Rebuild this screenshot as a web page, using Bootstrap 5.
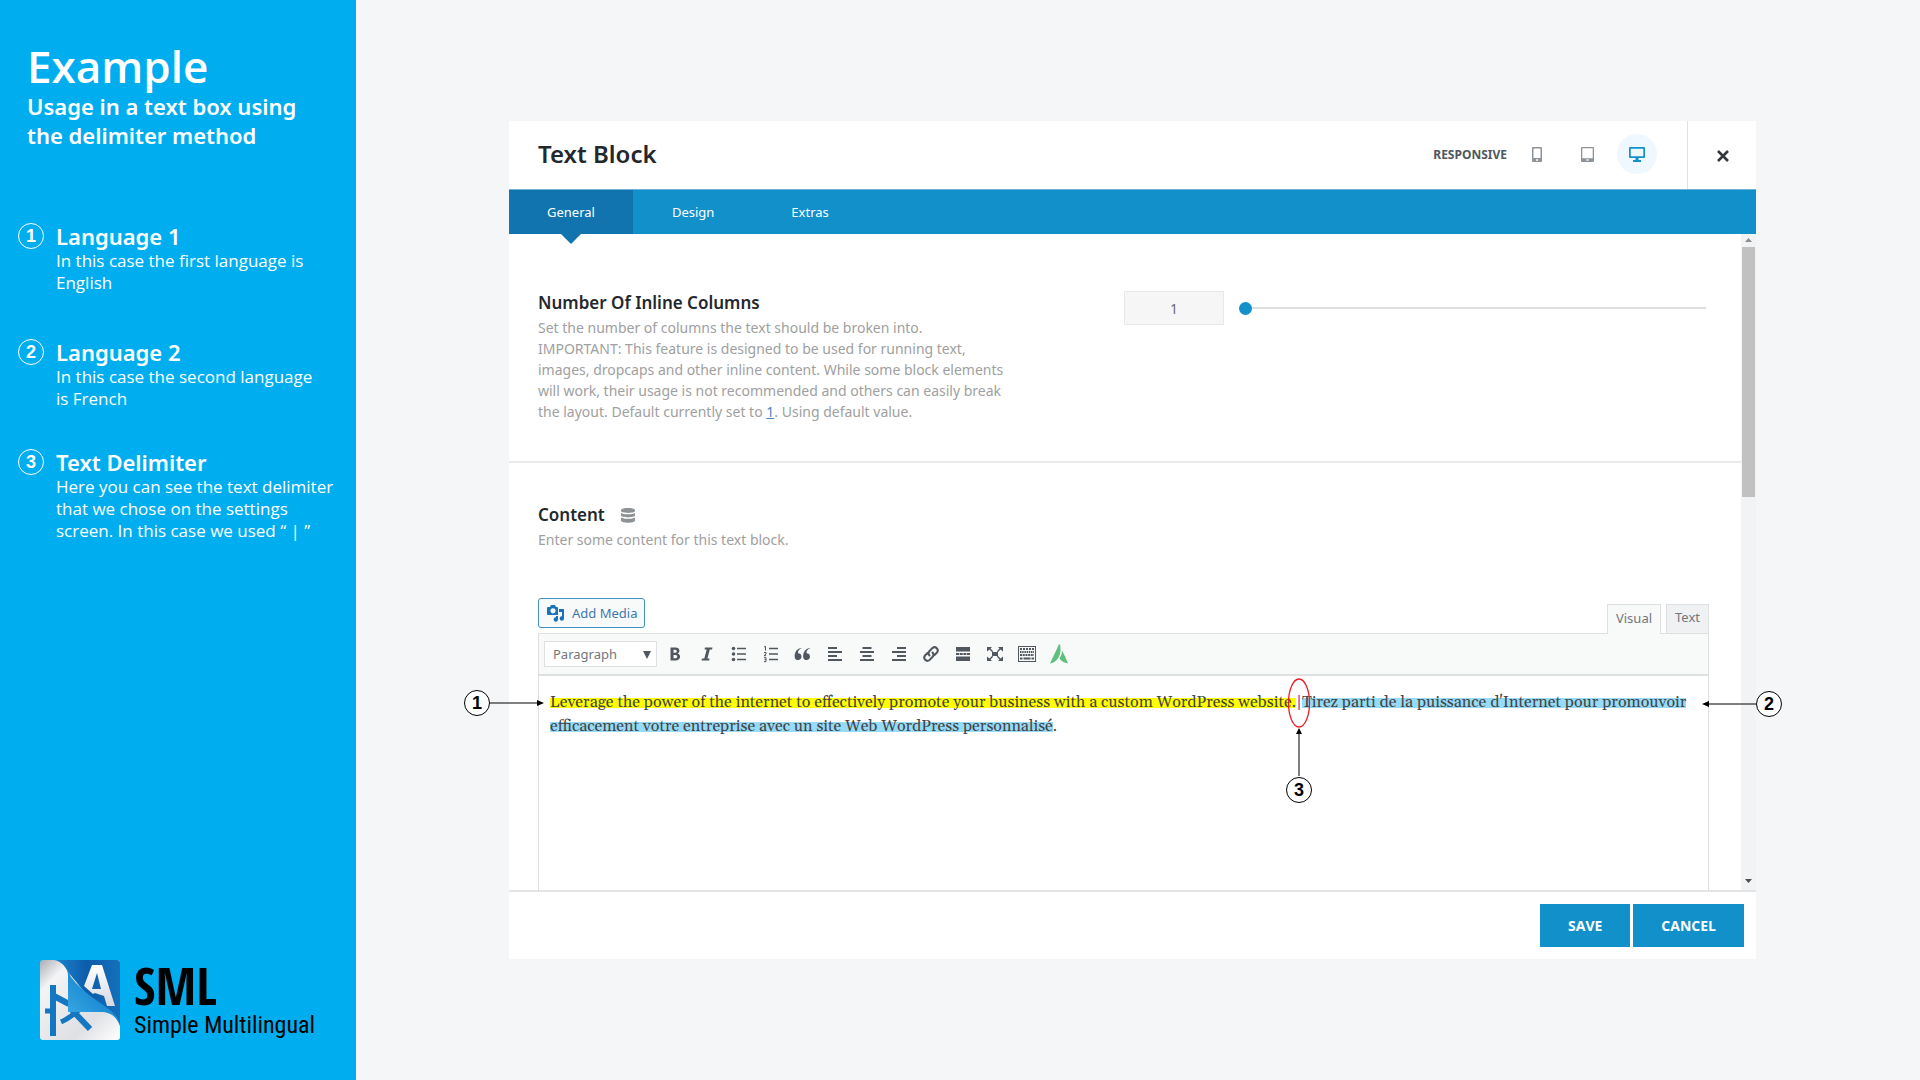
<!DOCTYPE html>
<html lang="en">
<head>
<meta charset="utf-8">
<meta name="viewport" content="width=device-width, initial-scale=1">
<title>Simple Multilingual – Example</title>
<link href="https://cdn.jsdelivr.net/npm/bootstrap@5.3.0/dist/css/bootstrap.min.css" rel="stylesheet">
<style>
  body { background: #f4f6f8; font-family: "Noto Sans", "Open Sans", sans-serif; font-size: 14px; line-height: 21px; }
  .guide { width: 356px; background: #00aef0; padding: 40px 12px 40px 18px; }
  .guide-title { font-family: "Open Sans", sans-serif; font-size: 44px; line-height: 52px; font-weight: 600; margin: 0 0 0 9px; }
  .guide-sub { font-size: 22px; line-height: 29px; font-weight: 600; margin: 0 40px 73px 9px; }
  .guide-list { gap: 45px; }
  .guide-list li { gap: 12px; }
  .guide-list li:nth-child(2) { margin-bottom: -6px; }
  .guide-head { font-size: 22px; line-height: 27px; font-weight: 600; margin: 0; }
  .guide-text { font-family: "Open Sans", sans-serif; font-size: 17px; line-height: 22px; margin: 0; }
  .pin { width: 26px; height: 26px; border: 1px solid currentColor; border-radius: 50%; font: 700 18px/24px "Liberation Sans", sans-serif; text-align: center; flex: none; }
  .brand { gap: 14px; margin-left: 22px; color: #000; }
  .brand-big { font-family: "Open Sans Condensed", "Lato", sans-serif; font-size: 52px; line-height: 50px; font-weight: 700; }
  .brand-small { font-family: "Roboto Condensed", "Lato", sans-serif; font-size: 24px; line-height: 30px; }

  .stage { padding: 121px 164px 121px 153px; }
  .panel-box { background: #fff; }
  .panel-head { height: 68px; padding: 0 0 2px 29px; }
  .panel-title { font-size: 24px; line-height: 28px; font-weight: 600; color: #23282d; margin: 0; }
  .resp-label { font-size: 12px; font-weight: 700; color: #50575e; margin-right: 10px; }
  .dev { width: 40px; height: 40px; border: 0; border-radius: 50%; background: none; color: #8d9399; padding: 0; margin-right: 10px; display: grid; place-items: center; }
  .dev.on { background: #eff8fe; color: #1190ca; margin-right: 30px; }
  .shut { width: 69px; height: 68px; margin-bottom: -2px; border: 0; border-left: 1px solid #dfe2e5; background: none; color: #32373c; padding: 2px 0 0 1px; display: grid; place-items: center; }
  .tabs-bar { background: #1190ca; height: 45px; border-top: 1px solid #6fb4d6; }
  .tabs-bar .nav-link { color: #fff; font-size: 13px; line-height: 20px; padding: 12px 38px; border-radius: 0; position: relative; }
  .tabs-bar .nav-link.active { background: #1174ae; }
  .tabs-bar .nav-item + .nav-item { margin-left: 1px; }
  .tabs-bar .nav-link.active::after { content: ""; position: absolute; left: 50%; top: 100%; margin-left: -10px; border: 10px solid transparent; border-top-color: #1174ae; border-bottom: 0; }
  .opt { padding: 57px 32px 39px 29px; border-bottom: 2px solid #e9eaeb; }
  .opt-head { font-size: 17px; line-height: 24px; font-weight: 600; color: #23282d; margin: 0 0 2px; }
  .opt-info { color: #a0a0a0; margin: 0; max-width: 468px; }
  .opt-info a { color: #4a86c0; }
  .opt-left { width: 586px; flex: none; }
  .num { width: 100px; height: 34px; border: 1px solid #e8e8e8; background: #f6f6f6; border-radius: 0; color: #6b6b6b; text-align: center; font-size: 14px; padding: 0; flex: none; }
  .slide { appearance: none; -webkit-appearance: none; height: 14px; background: none; flex: 1; min-width: 0; margin: 0 3px 0 15px; }
  .slide::-webkit-slider-runnable-track { height: 2px; background: #dedede; }
  .slide::-webkit-slider-thumb { -webkit-appearance: none; width: 13px; height: 13px; border-radius: 50%; background: #1190ca; margin-top: -5px; }
  .opt-edit { padding: 40px 32px 0 29px; }
  .media { height: 30px; border: 1px solid #3f8fca; border-radius: 3px; background: #f8fafa; color: #3d78ad; font-size: 13px; line-height: 20px; padding: 0 7px 0 8px; gap: 7px; }
  .mode { font-size: 13px; line-height: 20px; height: 29px; padding: 0 8px 4px; border: 1px solid #dddfe1; border-bottom: 0; background: #f0f1f2; color: #72777c; border-radius: 0; }
  .mode.on { background: #f8fafa; height: 30px; margin-bottom: -1px; position: relative; }
  .media-row { height: 35px; margin-top: 48px; }
  .edit-box { border: 1px solid #dddfe1; border-bottom: 0; }
  .tools { height: 42px; background: #f8fafa; border-bottom: 2px solid #dddfe1; padding-left: 5px; }
  .kind { width: 113px; height: 26px; border: 1px solid #dddfe1; background: #fff; color: #72777c; font-size: 13px; line-height: 20px; padding: 0 8px; appearance: none; -webkit-appearance: none; }
  .kind-wrap { position: relative; margin-right: 2px; }
  .kind-wrap svg { position: absolute; right: 6px; top: 10px; pointer-events: none; }
  .tool { width: 32px; height: 32px; border: 0; background: none; padding: 0; color: #50575e; display: grid; place-items: center; }
  .copy { font: 16px/24px "Gelasio", "Georgia", "Liberation Serif", serif; color: #444; padding: 14px 10px 0 11px; height: 214px; position: relative; }
  .hl { background: linear-gradient(#ff0, #ff0) 0 60% / 100% 10px no-repeat; -webkit-box-decoration-break: clone; box-decoration-break: clone; }
  .hl-b { background-image: linear-gradient(#96dbf8, #96dbf8); }
  .delim { position: relative; color: #8a3a8a; }
  .note { position: absolute; color: #000; }
  .note .pin { background: #fff; }
  .note-1 { right: 100%; top: 14px; margin-right: -5px; }
  .note-2 { left: 100%; top: 15px; margin-left: -6px; }
  .note-3 { left: 50%; top: -14px; width: 26px; margin-left: -13px; }
  .bar-col { width: 15px; background: #f1f3f4; padding: 3px 0 6px; flex: none; }
  .bar-thumb { width: 13px; height: 250px; background: #c1c1c1; margin: 4px 0 auto; }
  .panel-foot { border-top: 2px solid #e3e4e5; padding: 12px 12px 12px; gap: 3px; }
  .act { background: #1190ca; border: 0; border-radius: 0; color: #fff; font: 700 14px/20px "Open Sans", sans-serif; height: 43px; padding: 0 28px; }
</style>
</head>
<body>
<div class="d-flex min-vh-100">
  <aside class="guide d-flex flex-column text-white flex-shrink-0">
    <h1 class="guide-title">Example</h1>
    <p class="guide-sub">Usage in a text box using the delimiter method</p>
    <ol class="guide-list list-unstyled d-flex flex-column m-0">
      <li class="d-flex"><span class="pin">1</span><div><h2 class="guide-head">Language 1</h2><p class="guide-text">In this case the first language is<br>English</p></div></li>
      <li class="d-flex"><span class="pin">2</span><div><h2 class="guide-head">Language 2</h2><p class="guide-text">In this case the second language<br>is French</p></div></li>
      <li class="d-flex"><span class="pin">3</span><div><h2 class="guide-head">Text Delimiter</h2><p class="guide-text">Here you can see the text delimiter<br>that we chose on the settings<br>screen. In this case we used “ | ”</p></div></li>
    </ol>
    <div class="brand d-flex mt-auto">
      <svg width="80" height="80" viewBox="0 0 80 80" class="flex-shrink-0" aria-hidden="true">
        <defs>
          <linearGradient id="gl" x1="0" y1="0" x2="1" y2="1"><stop offset="0" stop-color="#a9adb3"/><stop offset=".2" stop-color="#f4f4f6"/><stop offset=".7" stop-color="#dfe0e4"/><stop offset="1" stop-color="#fff"/></linearGradient>
          <linearGradient id="gb" x1="0" y1="0" x2="1" y2="0"><stop offset="0" stop-color="#1c86cc"/><stop offset=".5" stop-color="#0d5cab"/><stop offset="1" stop-color="#1470ba"/></linearGradient>
          <linearGradient id="gf" x1="0" y1="1" x2="1" y2="0"><stop offset="0" stop-color="#45b4ea"/><stop offset=".5" stop-color="#1f8fd6"/><stop offset="1" stop-color="#1060b0"/></linearGradient>
          <linearGradient id="ga" x1="0" y1="0" x2="0" y2="1"><stop offset="0" stop-color="#fff"/><stop offset="1" stop-color="#d6d9e0"/></linearGradient>
        </defs>
        <rect width="80" height="80" rx="3" fill="url(#gl)"/>
        <path d="M14 0H77a3 3 0 0 1 3 3V66C76 54 66 50 56 46L28 12C24 4 20 1 14 0Z" fill="url(#gb)"/>
        <path d="M52 5h10l13 41h-8l-3-10-9-3-2 1-9-8Zm5 8-5 16h9Z" fill="url(#ga)" fill-rule="evenodd"/>
        <g stroke="#1577c0" fill="none"><path d="M13 25V76" stroke-width="6"/><path d="M5 51H14" stroke-width="5"/><path d="M14 36 29 44" stroke-width="6"/><path d="M21 62C30 58 34 54 39 50" stroke-width="5"/><path d="M32 50 50 69" stroke-width="6"/></g>
        <path d="M15 0C25 3 28 10 31 17C42 32 60 42 70 50C76 55 79 59 80 65C76 56 70 52 60 52H28V16C28 8 24 2 15 0Z" fill="url(#gf)"/>
      </svg>
      <div><div class="brand-big">SML</div><div class="brand-small text-nowrap">Simple Multilingual</div></div>
    </div>
  </aside>

  <main class="stage flex-grow-1">
    <section class="panel-box">
      <header class="panel-head d-flex align-items-center">
        <h2 class="panel-title me-auto">Text Block</h2>
        <span class="resp-label">RESPONSIVE</span>
        <button class="dev" aria-label="Phone"><svg width="10" height="15" viewBox="0 0 10 15"><path fill="currentColor" fill-rule="evenodd" d="M1 0h8a1 1 0 0 1 1 1v13a1 1 0 0 1-1 1H1a1 1 0 0 1-1-1V1a1 1 0 0 1 1-1Zm.5 1.500v9.500h7v-9.500ZM4 12.200v1.500h2v-1.500Z"/></svg></button>
        <button class="dev" aria-label="Tablet"><svg width="13" height="15" viewBox="0 0 13 15"><path fill="currentColor" fill-rule="evenodd" d="M1 0h11a1 1 0 0 1 1 1v13a1 1 0 0 1-1 1H1a1 1 0 0 1-1-1V1a1 1 0 0 1 1-1Zm.3 1.300v10h10.400v-10ZM5.500 12.300v1.500h2v-1.500Z"/></svg></button>
        <button class="dev on" aria-label="Desktop"><svg width="16" height="15" viewBox="0 0 16 15"><path fill="currentColor" fill-rule="evenodd" d="M1 0h14a1 1 0 0 1 1 1v9a1 1 0 0 1-1 1H9.500v2H12v2H4v-2h2.500v-2H1a1 1 0 0 1-1-1V1a1 1 0 0 1 1-1Zm.7 1.700v7.600h12.600V1.700Z"/></svg></button>
        <button class="shut" aria-label="Close"><svg width="12" height="12" viewBox="0 0 12 12" stroke="currentColor" stroke-width="2.600"><path d="M1 1 11 11M11 1 1 11"/></svg></button>
      </header>
      <nav class="tabs-bar">
        <ul class="nav">
          <li class="nav-item"><a class="nav-link active" href="#">General</a></li>
          <li class="nav-item"><a class="nav-link" href="#">Design</a></li>
          <li class="nav-item"><a class="nav-link" href="#">Extras</a></li>
        </ul>
      </nav>
      <div class="d-flex">
        <div class="flex-grow-1">
          <div class="opt d-flex align-items-start">
            <div class="opt-left">
              <h3 class="opt-head" id="cols">Number Of Inline Columns</h3>
              <p class="opt-info">Set the number of columns the text should be broken into. IMPORTANT: This feature is designed to be used for running text, images, dropcaps and other inline content. While some block elements will work, their usage is not recommended and others can easily break the layout. Default currently set to <a href="#">1</a>. Using default value.</p>
            </div>
            <div class="d-flex align-items-center flex-grow-1">
              <input class="num" type="text" value="1" aria-labelledby="cols">
              <input class="slide" type="range" min="1" max="6" value="1" aria-labelledby="cols">
            </div>
          </div>
          <div class="opt-edit">
            <h3 class="opt-head d-flex align-items-center">Content
              <svg class="ms-3" width="14" height="15" viewBox="0 0 14 15" fill="#8f9295"><path d="M0 2.200C0-.7 14-.7 14 2.200V3C14 5.500 0 5.500 0 3ZM0 5c2 1.700 12 1.700 14 0v2.500C14 9.800 0 9.800 0 7.500ZM0 9.500c2 1.700 12 1.700 14 0v3C14 15.500 0 15.500 0 12.500Z"/></svg>
            </h3>
            <p class="opt-info">Enter some content for this text block.</p>
            <div class="media-row d-flex justify-content-between align-items-start">
              <button class="media d-flex align-items-center"><svg width="18" height="18" viewBox="0 0 18 18" fill="#1a72b8"><path fill-rule="evenodd" d="M1 3h2l1-2h4l1 2h1a1 1 0 0 1 1 1v7H1a1 1 0 0 1-1-1V4a1 1 0 0 1 1-1Zm5 1.200a2.600 2.600 0 1 0 .01 0Z"/><path d="M12 5h5v9.500a2.200 2.200 0 1 1-2-2.200V8h-3Z"/><path d="M9 12h2v3.500a2.200 2.200 0 1 1-2-2.200Z"/></svg>Add Media</button>
              <div class="d-flex align-self-end align-items-end" style="gap:5px">
                <button class="mode on">Visual</button>
                <button class="mode">Text</button>
              </div>
            </div>
            <div class="edit-box">
              <div class="tools d-flex align-items-center">
                <div class="kind-wrap"><select class="kind d-block" aria-label="Text style"><option>Paragraph</option></select><svg width="8" height="8" viewBox="0 0 8 8"><path fill="#50575e" d="M0 0h8L4 8Z"/></svg></div>
                <button class="tool" aria-label="Bold"><svg width="20" height="20" viewBox="0 0 20 20"><path fill="currentColor" fill-rule="evenodd" d="M5.500 3.500h5c5 0 4.800 5 2 6 4 1 3.400 7-2 7h-5Zm3 2.300v3h1.800c2 0 2-3 0-3Zm0 5.100v3.400h2c2.300 0 2.300-3.400 0-3.400Z"/></svg></button>
                <button class="tool" aria-label="Italic"><svg width="20" height="20" viewBox="0 0 20 20"><path fill="currentColor" d="M8 3.500h7.500L15 5.500h-2.200l-2.400 9h2.200l-.5 2H4.500l.5-2h2.300l2.400-9H7.500Z"/></svg></button>
                <button class="tool" aria-label="Bulleted list"><svg width="20" height="20" viewBox="0 0 20 20"><g fill="currentColor"><circle cx="4.500" cy="4.500" r="1.800"/><circle cx="4.500" cy="10" r="1.800"/><circle cx="4.500" cy="15.500" r="1.800"/></g><path d="M8 4.500h9M8 10h9M8 15.500h9" stroke="currentColor" stroke-width="1.500"/></svg></button>
                <button class="tool" aria-label="Numbered list"><svg width="20" height="20" viewBox="0 0 20 20" fill="none" stroke="currentColor"><path d="M8 4.500h9M8 10h9M8 15.500h9" stroke-width="1.500"/><path d="M3 3l1.500-.7V6.500M3 8.500h2V10L3 11.700h2.200M3 13.700h2v4H3M3.500 15.700H5"/></svg></button>
                <button class="tool" aria-label="Quote"><svg width="20" height="20" viewBox="0 0 20 20" fill="currentColor"><path d="M9 4C6 5 4.800 7 5 9.200a3.400 3.400 0 1 1-3.300 4C1.300 8.500 4 4 9 4ZM17.500 4c-3 1-4.200 3-4 5.200a3.400 3.400 0 1 1-3.300 4C9.800 8.500 12.500 4 17.500 4Z"/></svg></button>
                <button class="tool" aria-label="Align left"><svg width="20" height="20" viewBox="0 0 20 20"><path d="M3 4h9M3 8h14M3 12h9M3 16h14" stroke="currentColor" stroke-width="2"/></svg></button>
                <button class="tool" aria-label="Align center"><svg width="20" height="20" viewBox="0 0 20 20"><path d="M5.500 4h9M3 8h14M5.500 12h9M3 16h14" stroke="currentColor" stroke-width="2"/></svg></button>
                <button class="tool" aria-label="Align right"><svg width="20" height="20" viewBox="0 0 20 20"><path d="M8 4h9M3 8h14M8 12h9M3 16h14" stroke="currentColor" stroke-width="2"/></svg></button>
                <button class="tool" aria-label="Link"><svg width="20" height="20" viewBox="0 0 20 20" fill="none" stroke="currentColor" stroke-width="2" stroke-linecap="round"><path d="M8.500 11.500a3.200 3.200 0 0 1 0-4.500l3-3a3.200 3.200 0 0 1 4.500 4.500L13.500 11M11.500 8.500a3.200 3.200 0 0 1 0 4.500l-3 3A3.200 3.200 0 0 1 4 11.500L6.500 9"/></svg></button>
                <button class="tool" aria-label="Read more"><svg width="20" height="20" viewBox="0 0 20 20"><path fill="currentColor" d="M3 3h14v4.500H3ZM3 12.500h14V17H3ZM3 9h3v2H3Zm3.700 0h3v2h-3Zm3.700 0h3v2h-3Zm3.600 0h3v2h-3Z"/></svg></button>
                <button class="tool" aria-label="Fullscreen"><svg width="20" height="20" viewBox="0 0 20 20" fill="currentColor"><path d="M7 8h6v4H7ZM2 3h5L5.500 4.500l2.700 2.700-1 1L4.500 5.500 2 7.500ZM18 3h-5l1.500 1.500-2.700 2.700 1 1 2.700-2.700L18 7.500ZM2 17h5l-1.500-1.500 2.700-2.700-1-1-2.700 2.700L2 12.500ZM18 17h-5l1.500-1.500-2.700-2.700 1-1 2.700 2.700L18 12.500Z"/></svg></button>
                <button class="tool" aria-label="Keyboard"><svg width="20" height="20" viewBox="0 0 20 20" fill="none" stroke="currentColor"><rect x="1.500" y="2.500" width="17" height="15"/><path d="M3 5h14" stroke-width="2" stroke-dasharray="2 1"/><path d="M3 8h14" stroke-width="2" stroke-dasharray="1.500 .7"/><path d="M3 11h14" stroke-width="2" stroke-dasharray="2 .7"/><path d="M3 14.500h2.500M6.500 14.500h7M14.500 14.500H17" stroke-width="2"/></svg></button>
                <button class="tool" aria-label="Builder elements"><svg width="20" height="20" viewBox="0 0 20 20" fill="#5fc07d"><path d="M10 0c1 0 1.500 2 1.500 6C11.500 13 7 18.500 1 19.500 4 13 7.500 6 10 0ZM13 6.500c2 3.500 4.500 9 6 13-5-1-7.500-3-8.500-5.500 1.500-2 2.500-4.500 2.500-7.500Z"/></svg></button>
              </div>
              <div class="copy">
                <span class="hl">Leverage the power of the internet to effectively promote your business with a custom WordPress website.</span><span class="delim">|<svg class="note note-3" width="26" height="126" viewBox="0 0 26 126" aria-hidden="true"><ellipse cx="13" cy="25" rx="10.500" ry="24" fill="none" stroke="#ed1c24" stroke-width="1.300"/><path d="M13 98V54" stroke="#000"/><path d="M13 50l3 6h-6Z"/><circle cx="13" cy="112" r="12.500" fill="#fff" stroke="#000"/><text x="13" y="118" text-anchor="middle" font-family="Liberation Sans, sans-serif" font-weight="700" font-size="18">3</text></svg></span><span class="hl hl-b">Tirez parti de la puissance d'Internet pour promouvoir efficacement votre entreprise avec un site Web WordPress personnalisé</span>.
                <div class="note note-1 d-flex align-items-center"><span class="pin">1</span><svg width="54" height="8" viewBox="0 0 54 8"><path d="M0 4H50" stroke="#000"/><path d="M54 4l-7 3V1Z"/></svg></div>
                <div class="note note-2 d-flex align-items-center"><svg width="54" height="8" viewBox="0 0 54 8"><path d="M4 4H54" stroke="#000"/><path d="M0 4l7 3V1Z"/></svg><span class="pin">2</span></div>
              </div>
            </div>
          </div>
        </div>
        <div class="bar-col d-flex flex-column align-items-center" aria-hidden="true">
          <svg width="7" height="6" viewBox="0 0 7 6"><path d="M0 5h7L3.500 1Z" fill="#8b8d8f"/></svg>
          <div class="bar-thumb"></div>
          <svg width="7" height="6" viewBox="0 0 7 6"><path d="M0 1h7L3.500 5Z" fill="#505050"/></svg>
        </div>
      </div>
      <footer class="panel-foot d-flex justify-content-end">
        <button class="act">SAVE</button>
        <button class="act">CANCEL</button>
      </footer>
    </section>
  </main>
</div>
<script src="https://cdn.jsdelivr.net/npm/bootstrap@5.3.0/dist/js/bootstrap.bundle.min.js"></script>
</body>
</html>
